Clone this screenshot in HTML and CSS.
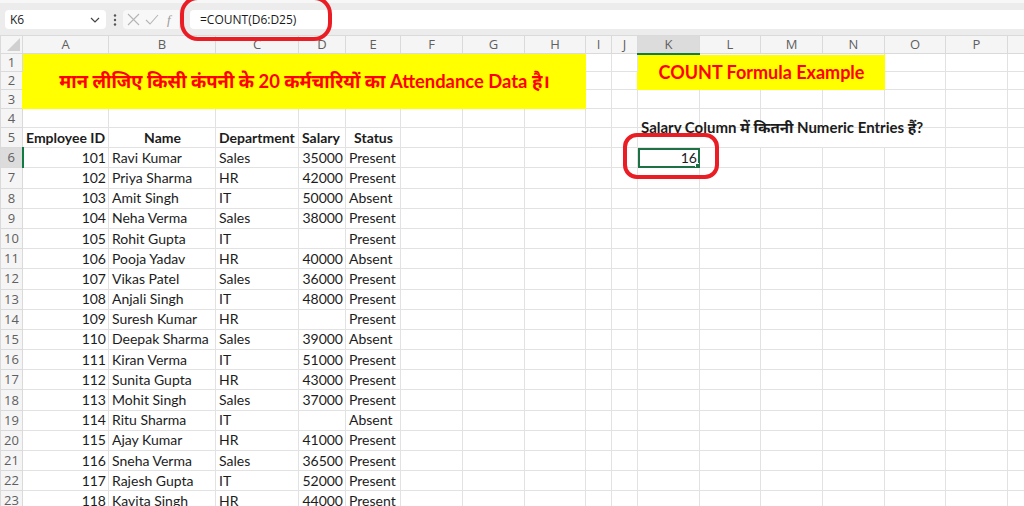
FILE: index.html
```html
<!DOCTYPE html>
<html lang="hi">
<head>
<meta charset="utf-8">
<title>COUNT Formula Example</title>
<link rel="stylesheet" href="styles.css">
</head>
<body>
<div class="fbar">
  <div class="namebox">
    <span>K6</span>
    <svg class="chev" width="10" height="6" viewBox="0 0 10 6"><path d="M1 1l4 4 4-4" fill="none" stroke="#444" stroke-width="1.2"/></svg>
  </div>
  <svg class="dots" width="4" height="14" viewBox="0 0 4 14"><circle cx="2" cy="2.5" r="1.2" fill="#555"/><circle cx="2" cy="7" r="1.2" fill="#555"/><circle cx="2" cy="11.5" r="1.2" fill="#555"/></svg>
  <div class="fxbox">
    <svg width="56" height="19" viewBox="0 0 56 19">
      <path d="M5 4l11 11M16 4L5 15" stroke="#b5b5b5" stroke-width="1.1" fill="none"/>
      <path d="M23 10l4 4 8-9" stroke="#b5b5b5" stroke-width="1.1" fill="none"/>
      <text x="44" y="14" font-family="Liberation Serif, serif" font-style="italic" font-size="13" fill="#9a9a9a">f</text>
    </svg>
  </div>
  <div class="finput">=COUNT(D6:D25)</div>
</div>

<table class="sheet">
  <colgroup>
    <col class="w-rh"><col class="w-a"><col class="w-b"><col class="w-c"><col class="w-d"><col class="w-e">
    <col class="w-f"><col class="w-g"><col class="w-h"><col class="w-i"><col class="w-j"><col class="w-k">
    <col class="w-l"><col class="w-m"><col class="w-n"><col class="w-o"><col class="w-p"><col class="w-q">
  </colgroup>
  <thead>
    <tr class="h-hdr">
      <th class="corner"><span class="tri"></span></th>
      <th>A</th><th>B</th><th>C</th><th>D</th><th>E</th><th>F</th><th>G</th><th>H</th><th>I</th><th>J</th>
      <th class="colsel">K</th><th>L</th><th>M</th><th>N</th><th>O</th><th>P</th><th></th>
    </tr>
  </thead>
  <tbody>
    <tr class="h-r1">
      <th>1</th>
      <td class="banner" colspan="8" rowspan="3">मान लीजिए किसी कंपनी के 20 कर्मचारियों का Attendance Data है।</td>
      <td></td><td></td>
      <td class="banner small" colspan="4" rowspan="2">COUNT Formula Example</td>
      <td></td><td></td><td></td>
    </tr>
    <tr class="h-r2">
      <th>2</th>
      <td></td><td></td><td></td><td></td><td></td>
    </tr>
    <tr class="h-r3">
      <th>3</th>
      <td></td><td></td><td></td><td></td><td></td><td></td><td></td><td></td><td></td>
    </tr>
    <tr class="h-r4">
      <th>4</th>
      <td></td><td></td><td></td><td></td><td></td><td></td><td></td><td></td><td></td>
      <td></td><td></td><td></td><td></td><td></td><td></td><td></td><td></td>
    </tr>
    <tr class="h-row">
      <th>5</th>
      <td class="b">Employee ID</td><td class="b c">Name</td><td class="b">Department</td><td class="b">Salary</td><td class="b c">Status</td>
      <td></td><td></td><td></td><td></td><td></td>
      <td class="b q" colspan="5"><span class="qtext">Salary Column में कितनी Numeric Entries हैं?</span></td>
      <td></td><td></td>
    </tr>
    <tr class="h-row">
      <th class="rowsel">6</th>
      <td class="r">101</td><td>Ravi Kumar</td><td>Sales</td><td class="r">35000</td><td>Present</td>
      <td></td><td></td><td></td><td></td><td></td>
      <td class="r active">16<span class="handle"></span></td>
      <td></td><td></td><td></td><td></td><td></td><td></td>
    </tr>
    <tr class="h-row"><th>7</th><td class="r">102</td><td>Priya Sharma</td><td>HR</td><td class="r">42000</td><td>Present</td><td></td><td></td><td></td><td></td><td></td><td></td><td></td><td></td><td></td><td></td><td></td><td></td></tr>
    <tr class="h-row"><th>8</th><td class="r">103</td><td>Amit Singh</td><td>IT</td><td class="r">50000</td><td>Absent</td><td></td><td></td><td></td><td></td><td></td><td></td><td></td><td></td><td></td><td></td><td></td><td></td></tr>
    <tr class="h-row"><th>9</th><td class="r">104</td><td>Neha Verma</td><td>Sales</td><td class="r">38000</td><td>Present</td><td></td><td></td><td></td><td></td><td></td><td></td><td></td><td></td><td></td><td></td><td></td><td></td></tr>
    <tr class="h-row"><th>10</th><td class="r">105</td><td>Rohit Gupta</td><td>IT</td><td class="r"></td><td>Present</td><td></td><td></td><td></td><td></td><td></td><td></td><td></td><td></td><td></td><td></td><td></td><td></td></tr>
    <tr class="h-row"><th>11</th><td class="r">106</td><td>Pooja Yadav</td><td>HR</td><td class="r">40000</td><td>Absent</td><td></td><td></td><td></td><td></td><td></td><td></td><td></td><td></td><td></td><td></td><td></td><td></td></tr>
    <tr class="h-row"><th>12</th><td class="r">107</td><td>Vikas Patel</td><td>Sales</td><td class="r">36000</td><td>Present</td><td></td><td></td><td></td><td></td><td></td><td></td><td></td><td></td><td></td><td></td><td></td><td></td></tr>
    <tr class="h-row"><th>13</th><td class="r">108</td><td>Anjali Singh</td><td>IT</td><td class="r">48000</td><td>Present</td><td></td><td></td><td></td><td></td><td></td><td></td><td></td><td></td><td></td><td></td><td></td><td></td></tr>
    <tr class="h-row"><th>14</th><td class="r">109</td><td>Suresh Kumar</td><td>HR</td><td class="r"></td><td>Present</td><td></td><td></td><td></td><td></td><td></td><td></td><td></td><td></td><td></td><td></td><td></td><td></td></tr>
    <tr class="h-row"><th>15</th><td class="r">110</td><td>Deepak Sharma</td><td>Sales</td><td class="r">39000</td><td>Absent</td><td></td><td></td><td></td><td></td><td></td><td></td><td></td><td></td><td></td><td></td><td></td><td></td></tr>
    <tr class="h-row"><th>16</th><td class="r">111</td><td>Kiran Verma</td><td>IT</td><td class="r">51000</td><td>Present</td><td></td><td></td><td></td><td></td><td></td><td></td><td></td><td></td><td></td><td></td><td></td><td></td></tr>
    <tr class="h-row"><th>17</th><td class="r">112</td><td>Sunita Gupta</td><td>HR</td><td class="r">43000</td><td>Present</td><td></td><td></td><td></td><td></td><td></td><td></td><td></td><td></td><td></td><td></td><td></td><td></td></tr>
    <tr class="h-row"><th>18</th><td class="r">113</td><td>Mohit Singh</td><td>Sales</td><td class="r">37000</td><td>Present</td><td></td><td></td><td></td><td></td><td></td><td></td><td></td><td></td><td></td><td></td><td></td><td></td></tr>
    <tr class="h-row"><th>19</th><td class="r">114</td><td>Ritu Sharma</td><td>IT</td><td class="r"></td><td>Absent</td><td></td><td></td><td></td><td></td><td></td><td></td><td></td><td></td><td></td><td></td><td></td><td></td></tr>
    <tr class="h-row"><th>20</th><td class="r">115</td><td>Ajay Kumar</td><td>HR</td><td class="r">41000</td><td>Present</td><td></td><td></td><td></td><td></td><td></td><td></td><td></td><td></td><td></td><td></td><td></td><td></td></tr>
    <tr class="h-row"><th>21</th><td class="r">116</td><td>Sneha Verma</td><td>Sales</td><td class="r">36500</td><td>Present</td><td></td><td></td><td></td><td></td><td></td><td></td><td></td><td></td><td></td><td></td><td></td><td></td></tr>
    <tr class="h-row"><th>22</th><td class="r">117</td><td>Rajesh Gupta</td><td>IT</td><td class="r">52000</td><td>Present</td><td></td><td></td><td></td><td></td><td></td><td></td><td></td><td></td><td></td><td></td><td></td><td></td></tr>
    <tr class="h-row"><th>23</th><td class="r">118</td><td>Kavita Singh</td><td>HR</td><td class="r">44000</td><td>Present</td><td></td><td></td><td></td><td></td><td></td><td></td><td></td><td></td><td></td><td></td><td></td><td></td></tr>
  </tbody>
</table>

<div class="mark mark-formula"></div>
<div class="mark mark-result"></div>
</body>
</html>
```
FILE: styles.css
```css
html, body {
  margin: 0;
  padding: 0;
}

body {
  width: 1024px;
  height: 506px;
  overflow: hidden;
  background: #ffffff;
  position: relative;
  font-family: "Lato", "Noto Sans Devanagari", "Lohit Devanagari", "Noto Sans", sans-serif;
  color: #1c1c1c;
}

/* ---------- formula bar ---------- */
.fbar {
  height: 35px;
  box-sizing: border-box;
  border-top: 3px solid #f7f7f7;
  padding: 7px 0 6px 5px;
  background: #ececec;
  display: flex;
  align-items: stretch;
}

.namebox {
  width: 101px;
  box-sizing: border-box;
  background: #ffffff;
  border-radius: 4px;
  display: flex;
  align-items: center;
  justify-content: space-between;
  padding: 0 6px 0 5px;
  font-family: "Open Sans", "Noto Sans", sans-serif;
  font-size: 12px;
  color: #222;
}

.dots {
  align-self: center;
  margin-left: 7px;
}

.fxbox {
  margin-left: 6px;
  width: 56px;
  background: #f8f8f8;
  border-radius: 4px 0 0 4px;
}

.fxbox svg {
  display: block;
}

.finput {
  flex: 1;
  margin-left: 11px;
  background: #ffffff;
  border-radius: 4px 0 0 4px;
  padding-left: 10px;
  font-family: "Open Sans", "Noto Sans", sans-serif;
  font-size: 12px;
  line-height: 19px;
  color: #1a1a1a;
}

/* ---------- grid ---------- */
.sheet {
  table-layout: fixed;
  border-collapse: collapse;
  width: 1024px;
  font-size: 14px;
}

.w-rh { width: 22px; }
.w-a { width: 86px; }
.w-b { width: 107px; }
.w-c { width: 83px; }
.w-d { width: 47px; }
.w-e { width: 55px; }
.w-f { width: 62px; }
.w-g { width: 62px; }
.w-h { width: 61px; }
.w-i { width: 26px; }
.w-j { width: 26px; }
.w-k { width: 62px; }
.w-l { width: 61px; }
.w-m { width: 62px; }
.w-n { width: 62px; }
.w-o { width: 61px; }
.w-p { width: 62px; }
.w-q { width: 17px; }

.sheet td {
  border: 1px solid #e2e2e2;
  padding: 0 2px 0 3px;
  white-space: nowrap;
  overflow: hidden;
  line-height: 1;
  vertical-align: middle;
}

.sheet th {
  background: #f5f5f5;
  color: #5f5f5f;
  font-family: "Open Sans", "Noto Sans", sans-serif;
  font-weight: 400;
  font-size: 13px;
  border: 1px solid #dadada;
  padding: 0;
  line-height: 1;
  text-align: center;
  overflow: hidden;
}

thead th {
  border-top: none;
  border-bottom-color: #cfcfcf;
}

.corner {
  position: relative;
}

.tri {
  position: absolute;
  right: 2px;
  bottom: 2px;
  width: 0;
  height: 0;
  border-left: 13px solid transparent;
  border-bottom: 13px solid #d0d0d0;
}

.sheet th.colsel {
  background: #dcdcdc;
  border-bottom: 2px solid #107c41;
}

.sheet th.rowsel {
  background: #dcdcdc;
  border-right: 2px solid #107c41;
}

.h-hdr { height: 18px; }
.h-r1 { height: 18px; }
.h-r2 { height: 18px; }
.h-r3 { height: 19px; }
.h-r4 { height: 19px; }
.h-row { height: 20.2px; }

.b { font-weight: 700; }
.c { text-align: center; }
.r { text-align: right; }

.sheet td.banner {
  background: #ffff00;
  border-color: #ffff00;
  color: #ff0000;
  font-weight: 700;
  font-size: 18.4px;
  text-align: center;
}

.sheet td.banner.small {
  font-size: 18px;
}

/* question label spills over the neighbouring cells and sits high in its row */
.sheet td.q {
  overflow: visible;
  vertical-align: top;
}

.qtext {
  display: block;
  font-size: 15px;
  line-height: 18px;
  margin-top: -10px;
}

.sheet td.active {
  position: relative;
  outline: 2px solid #1e7145;
  outline-offset: -2px;
}

.handle {
  position: absolute;
  right: -3px;
  bottom: -3px;
  width: 5px;
  height: 5px;
  background: #1e7145;
  border: 1px solid #ffffff;
}

/* ---------- red hand-drawn highlights ---------- */
.mark {
  position: absolute;
  box-sizing: border-box;
  border: 4px solid #ea1c24;
}

.mark-formula {
  left: 180px;
  top: -4px;
  width: 152px;
  height: 45px;
  border-radius: 18px;
}

.mark-result {
  left: 623px;
  top: 133px;
  width: 96px;
  height: 46px;
  border-radius: 14px;
}
```
